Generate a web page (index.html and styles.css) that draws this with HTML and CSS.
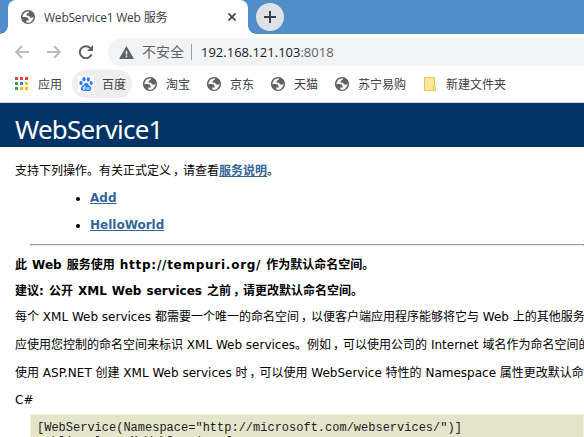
FILE: index.html
```html
<!DOCTYPE html>
<html lang="zh-CN">
<head>
	<meta charset="UTF-8">
	<title>WebService1 Web 服务</title>
	<link rel="stylesheet" href="styles.css">
</head>
<body>
<svg class="defs" width="0" height="0">
	<symbol id="globe" viewBox="2 2 20 20">
		<path fill="#5f6368" fill-rule="evenodd" d="M12 2C6.480 2 2 6.480 2 12s4.480 10 10 10 10-4.480 10-10S17.520 2 12 2zM4 12h4.400c3.407.022 4.922 1.730 4.543 5.127H9.488v2.470a8.004 8.004 0 0 0 10.498-8.083C19.327 12.504 18.332 13 17 13c-2.137 0-3.206-.916-3.206-2.750h-3.748c-.274-2.728.683-4.092 2.870-4.092 0-.975.327-1.597.811-1.970A8.004 8.004 0 0 0 4 12z"/>
	</symbol>
</svg>

<div class="tabstrip">
	<div class="tab">
		<svg class="globe"><use href="#globe"/></svg>
		<span class="tab-title">WebService1 Web 服务</span>
		<svg class="close" viewBox="0 0 8 8"><path d="M.5.5l7 7M7.500.5l-7 7"/></svg>
	</div>
	<div class="newtab">
		<svg viewBox="0 0 12 12"><path d="M6 0v12M0 6h12"/></svg>
	</div>
</div>

<div class="toolbar">
	<svg class="nav off" viewBox="0 0 14 14"><path d="M14 7H1.500M7 1L1.200 7L7 13"/></svg>
	<svg class="nav off" viewBox="0 0 14 14"><path d="M0 7h12.500M7 1l5.800 6L7 13"/></svg>
	<svg class="nav" viewBox="0 0 14 14"><path d="M12.500 9.300A6 6 0 1 1 11.400 3.200"/><path class="fill" d="M14 0v6H8z"/></svg>
	<div class="omnibox">
		<svg class="warn" viewBox="0 0 15 13"><path d="M7.500 0L15 13H0z" fill="#5f6368"/><path d="M7.500 5v3.500M7.500 9.500v1.700" stroke="#f1f3f4" stroke-width="1.500"/></svg>
		<span class="insecure">不安全</span>
		<span class="url">192.168.121.103<span class="port">:8018</span></span>
	</div>
</div>

<div class="bookmarks">
	<div class="bm apps">
		<svg viewBox="0 0 13 13">
			<path fill="#ea4335" d="M0 0h3v3H0zM5 0h3v3H5zM10 0h3v3h-3z"/>
			<path fill="#34a053" d="M0 5h3v3H0zM0 10h3v3H0z"/>
			<path fill="#1a84f0" d="M5 5h3v3H5z"/>
			<path fill="#fbbc05" d="M10 5h3v3h-3zM5 10h3v3H5zM10 10h3v3h-3z"/>
		</svg>
		<span>应用</span>
	</div>
	<div class="bm baidu">
		<svg viewBox="0 0 16 16">
			<path fill="#fff" d="M0 0h16v16H0z"/>
			<g fill="#2f7df6">
				<ellipse cx="3" cy="7" rx="1.700" ry="2.200"/>
				<ellipse cx="6" cy="3.300" rx="1.600" ry="2.300"/>
				<ellipse cx="10.300" cy="3.400" rx="1.600" ry="2.200"/>
				<ellipse cx="13.200" cy="7" rx="1.600" ry="2.100"/>
				<path d="M8 6.700c1.600 0 2 1.600 3.300 2.800 1.500 1.200 2.300 2.200 1.900 3.800-.4 1.700-2 1.900-5.200 1.600-3 .3-4.700 0-5-1.600-.3-1.600.5-2.500 1.900-3.700C6.200 8.400 6.500 6.700 8 6.700z"/>
			</g>
			<path d="M7 9.500v3.800H5.300v-2H7M9 11v2.300h2V11" fill="none" stroke="#fff" stroke-width=".8"/>
		</svg>
		<span>百度</span>
	</div>
	<div class="bm"><svg class="globe"><use href="#globe"/></svg><span>淘宝</span></div>
	<div class="bm"><svg class="globe"><use href="#globe"/></svg><span>京东</span></div>
	<div class="bm"><svg class="globe"><use href="#globe"/></svg><span>天猫</span></div>
	<div class="bm"><svg class="globe"><use href="#globe"/></svg><span>苏宁易购</span></div>
	<div class="bm folder">
		<svg viewBox="0 0 12 14"><path d="M.5.5h10v9h1v4H.5z" fill="#ffe694" stroke="#e8c84c"/><path d="M9.500 13V9.500h1.500" fill="none" stroke="#e8c84c"/></svg>
		<span>新建文件夹</span>
	</div>
</div>

<div id="content">
	<p class="heading1">WebService1</p>
	<p class="intro">支持下列操作。有关正式定义<span class="comma">，</span>请查看<a href="#">服务说明</a>。</p>
	<ul>
		<li><a href="#">Add</a></li>
		<li><a href="#">HelloWorld</a></li>
	</ul>
	<hr>
	<h3>此 Web 服务使用 <span class="ns">http://tempuri.org/</span> 作为默认命名空间。</h3>
	<h3>建议: 公开 XML Web services 之前<span class="comma">，</span>请更改默认命名空间。</h3>
	<p class="text">每个 XML Web services 都需要一个唯一的命名空间<span class="comma">，</span>以便客户端应用程序能够将它与 Web 上的其他服务</p>
	<p class="text">应使用您控制的命名空间来标识 XML Web services。例如<span class="comma">，</span>可以使用公司的 Internet 域名作为命名空间的</p>
	<p class="text">使用 ASP.NET 创建 XML Web services 时<span class="comma">，</span>可以使用 WebService 特性的 Namespace 属性更改默认命</p>
	<p class="text lang">C#</p>
	<pre>[WebService(Namespace="http://microsoft.com/webservices/")]
public class MyWebService {</pre>
</div>
</body>
</html>
```
FILE: styles.css
```css
body {
	display: flex;
	flex-direction: column;
	margin: 0;
	height: 437px;
	overflow: hidden;
	background: #fff;
	color: #000;
	font-family: "DejaVu Sans", "Noto Sans CJK SC", sans-serif;
	font-size: 12px;
}
svg {
	display: block;
	flex: none;
}
.defs {
	display: none;
}
.globe {
	width: 14px;
	height: 14px;
}

/* browser chrome */
.tabstrip, .toolbar, .bookmarks {
	display: flex;
	align-items: center;
	flex: none;
	box-sizing: border-box;
	font-family: "Open Sans", "Noto Sans CJK SC", sans-serif;
	white-space: nowrap;
}
.tabstrip {
	height: 34px;
	background: #518dc8;
	padding-left: 8px;
}
.tab {
	position: relative;
	display: flex;
	align-items: center;
	box-sizing: border-box;
	width: 240px;
	height: 34px;
	padding: 0 12px 0 13px;
	background: #fff;
	border-radius: 8px 8px 0 0;
	color: #3c4043;
}
.tab::before, .tab::after {
	content: "";
	position: absolute;
	bottom: 0;
	width: 8px;
	height: 8px;
}
.tab::before {
	left: -8px;
	background: radial-gradient(circle at 0 0, transparent 7.5px, #fff 8px);
}
.tab::after {
	right: -8px;
	background: radial-gradient(circle at 100% 0, transparent 7.5px, #fff 8px);
}
.tab-title {
	flex: 1;
	margin-left: 9px;
	letter-spacing: -.22px;
}
.close {
	width: 8px;
	height: 8px;
	stroke: #3c4043;
	stroke-width: 1.6;
}
.newtab {
	display: flex;
	align-items: center;
	justify-content: center;
	width: 28px;
	height: 28px;
	margin-left: 8px;
	border-radius: 50%;
	background: #dee1e6;
}
.newtab svg {
	width: 12px;
	height: 12px;
	stroke: #3c4043;
	stroke-width: 2;
}
.toolbar {
	height: 36px;
	padding: 0 0 0 15px;
	gap: 18px;
}
.nav {
	width: 14px;
	height: 14px;
	fill: none;
	stroke: #5f6368;
	stroke-width: 2;
}
.nav .fill {
	fill: #5f6368;
	stroke: none;
}
.off {
	stroke: #babcbe;
}
.omnibox {
	display: flex;
	align-items: center;
	flex: 1;
	height: 28px;
	margin-left: -3px;
	padding-left: 11px;
	border-radius: 14px 0 0 14px;
	background: #f1f3f4;
	font-size: 14px;
}
.warn {
	width: 15px;
	height: 13px;
}
.insecure {
	margin-left: 8px;
	padding-right: 7px;
	border-right: 1px solid #9aa0a6;
	line-height: 16px;
	color: #5f6368;
}
.url {
	margin-left: 9px;
	font-size: 13px;
	color: #202124;
}
.port {
	color: #5f6368;
}
.bookmarks {
	height: 33px;
	padding: 0 0 5px 7px;
	border-bottom: 1px solid #d5d7d9;
	color: #3c4043;
}
.bm {
	display: flex;
	align-items: center;
	height: 28px;
	padding: 0 6px 0 8px;
	gap: 9px;
	margin-right: 3px;
	border-radius: 14px;
}
.apps {
	gap: 10px;
	margin-right: 4px;
}
.apps svg {
	width: 13px;
	height: 13px;
}
.baidu {
	background: #eee;
	padding-left: 6px;
	gap: 8px;
}
.baidu svg {
	width: 16px;
	height: 16px;
}
.folder {
	padding-left: 9px;
	gap: 10px;
}
.folder svg {
	width: 12px;
	height: 14px;
}

/* service description page */
#content {
	flex: 1;
	min-height: 0;
	overflow: hidden;
	white-space: nowrap;
}
#content p {
	margin: 0;
}
#content .heading1 {
	box-sizing: border-box;
	height: 44px;
	padding: 8px 0 0 15px;
	background: #003366;
	color: #fff;
	font-family: "Noto Sans", sans-serif;
	font-size: 26px;
	line-height: 36px;
	letter-spacing: -.75px;
}
#content .intro {
	padding: 15px 0 0 15px;
	line-height: 18px;
}
/* comma sits in the middle of its cell */
.comma {
	display: inline-block;
	width: 12px;
	text-indent: 2px;
}
a {
	color: #336699;
	font-weight: bold;
}
ul {
	margin: 9px 0 0 50px;
	padding-left: 40px;
}
li {
	height: 27px;
	line-height: 18px;
}
hr {
	margin: 1px 0 10px 30px;
	border: 1px solid #999;
	border-bottom-color: #eee;
}
h3 {
	margin: 0 0 8px 15px;
	font-size: 12px;
	line-height: 18px;
	word-spacing: .9px;
}
.ns {
	letter-spacing: .74px;
}
#content .text {
	margin: 0 0 10px 15px;
	line-height: 18px;
}
#content .lang {
	margin-top: -1px;
}
pre {
	margin: -5px 0 0 30px;
	padding: 6px;
	border: 1px solid #f0f0e0;
	background: #e5e5cc;
	color: #222;
	font-family: "Liberation Mono", monospace;
	font-size: 12px;
	line-height: 14px;
}
```
